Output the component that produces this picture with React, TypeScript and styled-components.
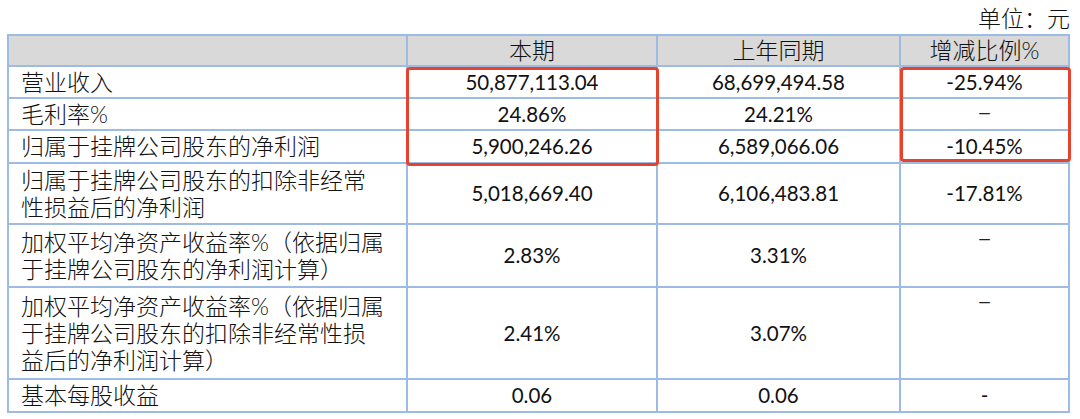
import React from "react";
import styled, { createGlobalStyle, css } from "styled-components";

const GlobalStyle = createGlobalStyle`
  html, body { margin: 0; padding: 0; background: #ffffff; }
  body { font-family: "Lato", "Noto Sans CJK SC", sans-serif; color: #111111; }
`;

const Page = styled.div`
  width: 1080px;
  height: 419px;
  padding: 0 0 0 7px;
  box-sizing: border-box;
`;

const Unit = styled.div`
  width: 1063px;
  height: 34px;
  display: flex;
  align-items: center;
  justify-content: flex-end;
  padding-top: 2px;
  box-sizing: border-box;
  font-size: 23px;
  line-height: 27px;
  font-weight: 300;
`;

const TableWrap = styled.div`
  position: relative;
  width: 1063px;
`;

const Table = styled.div`
  border-left: 2px solid #9dbbe3;
  border-top: 2px solid #9dbbe3;
  width: 1063px;
  box-sizing: border-box;
`;

const Row = styled.div<{ $h: number; $head?: boolean }>`
  display: grid;
  grid-template-columns: 399px 250px 243px 169px;
  height: ${(p) => p.$h}px;
  background: ${(p) => (p.$head ? "#d9d9d9" : "#ffffff")};
`;

const Cell = styled.div<{ $kind: "label" | "num" | "head"; $top?: boolean }>`
  box-sizing: border-box;
  border-right: 2px solid #9dbbe3;
  border-bottom: 2px solid #9dbbe3;
  display: flex;
  line-height: 27px;
  align-items: ${(p) => (p.$top ? "flex-start" : "center")};
  ${(p) => p.$top && css`padding-top: 2px;`}
  ${(p) =>
    p.$kind === "label"
      ? css`
          justify-content: flex-start;
          padding-left: 12px;
          font-size: 23px;
          font-weight: 300;
        `
      : p.$kind === "head"
      ? css`
          justify-content: center;
          font-size: 23px;
          font-weight: 300;
        `
      : css`
          justify-content: center;
          font-size: 20.5px;
          font-weight: 400;
        `}
`;

const Label = styled.span`
  display: block;
  white-space: nowrap;
`;

const Dash = styled.span`
  font-family: "Liberation Sans", sans-serif;
  font-weight: 400;
  font-size: 19px;
  color: #222222;
  transform: translateY(-3px);
  display: inline-block;
`;

const Highlight = styled.div<{ $left: number; $top: number; $w: number; $h: number }>`
  position: absolute;
  left: ${(p) => p.$left}px;
  top: ${(p) => p.$top}px;
  width: ${(p) => p.$w}px;
  height: ${(p) => p.$h}px;
  border: 3px solid #e5432e;
  border-radius: 4px;
  box-sizing: border-box;
  pointer-events: none;
`;

type RowData = {
  h: number;
  label: string[];
  cur: string;
  prev: string;
  change: string;
  changeTop?: boolean;
};

const rows: RowData[] = [
  { h: 32, label: ["营业收入"], cur: "50,877,113.04", prev: "68,699,494.58", change: "-25.94%" },
  { h: 32, label: ["毛利率%"], cur: "24.86%", prev: "24.21%", change: "–" },
  { h: 33, label: ["归属于挂牌公司股东的净利润"], cur: "5,900,246.26", prev: "6,589,066.06", change: "-10.45%" },
  {
    h: 61,
    label: ["归属于挂牌公司股东的扣除非经常", "性损益后的净利润"],
    cur: "5,018,669.40",
    prev: "6,106,483.81",
    change: "-17.81%",
  },
  {
    h: 63,
    label: ["加权平均净资产收益率%（依据归属", "于挂牌公司股东的净利润计算）"],
    cur: "2.83%",
    prev: "3.31%",
    change: "–",
    changeTop: true,
  },
  {
    h: 92,
    label: ["加权平均净资产收益率%（依据归属", "于挂牌公司股东的扣除非经常性损", "益后的净利润计算）"],
    cur: "2.41%",
    prev: "3.07%",
    change: "–",
    changeTop: true,
  },
  { h: 33, label: ["基本每股收益"], cur: "0.06", prev: "0.06", change: "-" },
];

export default function App() {
  return (
    <Page>
      <GlobalStyle />
      <Unit>单位：元</Unit>
      <TableWrap>
        <Table>
          <Row $h={31} $head>
            <Cell $kind="head" />
            <Cell $kind="head">本期</Cell>
            <Cell $kind="head">上年同期</Cell>
            <Cell $kind="head">增减比例%</Cell>
          </Row>
          {rows.map((r, i) => (
            <Row key={i} $h={r.h}>
              <Cell $kind="label">
                <Label>
                  {r.label.map((l, j) => (
                    <React.Fragment key={j}>
                      {j > 0 && <br />}
                      {l}
                    </React.Fragment>
                  ))}
                </Label>
              </Cell>
              <Cell $kind="num">{r.cur}</Cell>
              <Cell $kind="num">{r.prev}</Cell>
              <Cell $kind="num" $top={r.changeTop}>
                {r.change === "–" ? <Dash>{r.change}</Dash> : r.change}
              </Cell>
            </Row>
          ))}
        </Table>
        <Highlight $left={399} $top={33} $w={253} $h={99} />
        <Highlight $left={893} $top={33} $w={171} $h={95} />
      </TableWrap>
    </Page>
  );
}
